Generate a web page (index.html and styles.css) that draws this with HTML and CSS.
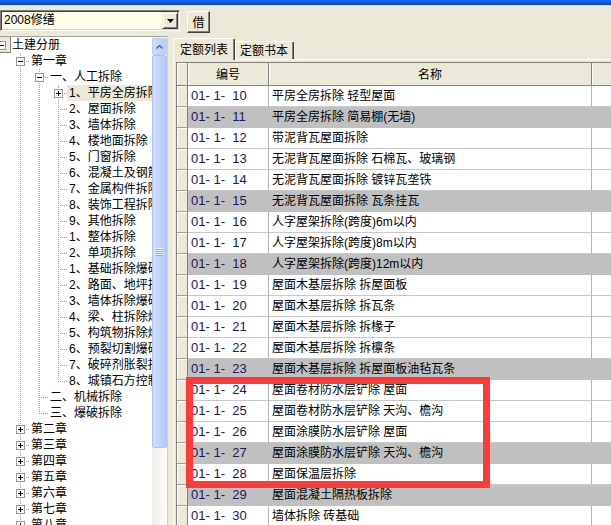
FILE: index.html
```html
<!DOCTYPE html>
<html lang="zh-CN">
<head>
<meta charset="utf-8">
<title>定额</title>
<link rel="stylesheet" href="styles.css">
</head>
<body>
<div class="app">
  <div class="titlebar"></div>
  <div class="toolbar">
    <div class="combo">
      <span class="combo-text">2008修缮</span>
      <span class="combo-btn"><svg width="7" height="4" viewBox="0 0 7 4"><path d="M0 0H7L3.5 4Z" fill="#000"/></svg></span>
    </div>
    <button class="btn">借</button>
  </div>
  <div class="main">
    <div class="tree-panel">
      <div class="tree">
        <div class="tr"><span class="i h"><span class="bx mi"></span></span><span class="t">土建分册</span></div>
        <div class="tr"><span class="i"></span><span class="i c"><span class="bx mi"></span></span><span class="t">第一章</span></div>
        <div class="tr"><span class="i"></span><span class="i g"></span><span class="i c"><span class="bx mi"></span></span><span class="t">一、人工拆除</span></div>
        <div class="tr"><span class="i"></span><span class="i g"></span><span class="i g"></span><span class="i c"><span class="bx pl"></span></span><span class="t sel">1、平房全房拆除</span></div>
        <div class="tr"><span class="i"></span><span class="i g"></span><span class="i g"></span><span class="i c"></span><span class="t">2、屋面拆除</span></div>
        <div class="tr"><span class="i"></span><span class="i g"></span><span class="i g"></span><span class="i c"></span><span class="t">3、墙体拆除</span></div>
        <div class="tr"><span class="i"></span><span class="i g"></span><span class="i g"></span><span class="i c"></span><span class="t">4、楼地面拆除</span></div>
        <div class="tr"><span class="i"></span><span class="i g"></span><span class="i g"></span><span class="i c"></span><span class="t">5、门窗拆除</span></div>
        <div class="tr"><span class="i"></span><span class="i g"></span><span class="i g"></span><span class="i c"></span><span class="t">6、混凝土及钢筋混凝土拆除</span></div>
        <div class="tr"><span class="i"></span><span class="i g"></span><span class="i g"></span><span class="i c"></span><span class="t">7、金属构件拆除</span></div>
        <div class="tr"><span class="i"></span><span class="i g"></span><span class="i g"></span><span class="i c"></span><span class="t">8、装饰工程拆除</span></div>
        <div class="tr"><span class="i"></span><span class="i g"></span><span class="i g"></span><span class="i c"></span><span class="t">9、其他拆除</span></div>
        <div class="tr"><span class="i"></span><span class="i g"></span><span class="i g"></span><span class="i c"></span><span class="t">1、整体拆除</span></div>
        <div class="tr"><span class="i"></span><span class="i g"></span><span class="i g"></span><span class="i c"></span><span class="t">2、单项拆除</span></div>
        <div class="tr"><span class="i"></span><span class="i g"></span><span class="i g"></span><span class="i c"></span><span class="t">1、基础拆除爆破</span></div>
        <div class="tr"><span class="i"></span><span class="i g"></span><span class="i g"></span><span class="i c"></span><span class="t">2、路面、地坪拆除爆破</span></div>
        <div class="tr"><span class="i"></span><span class="i g"></span><span class="i g"></span><span class="i c"></span><span class="t">3、墙体拆除爆破</span></div>
        <div class="tr"><span class="i"></span><span class="i g"></span><span class="i g"></span><span class="i c"></span><span class="t">4、梁、柱拆除爆破</span></div>
        <div class="tr"><span class="i"></span><span class="i g"></span><span class="i g"></span><span class="i c"></span><span class="t">5、构筑物拆除爆破</span></div>
        <div class="tr"><span class="i"></span><span class="i g"></span><span class="i g"></span><span class="i c"></span><span class="t">6、预裂切割爆破</span></div>
        <div class="tr"><span class="i"></span><span class="i g"></span><span class="i g"></span><span class="i c"></span><span class="t">7、破碎剂胀裂拆除</span></div>
        <div class="tr"><span class="i"></span><span class="i g"></span><span class="i g"></span><span class="i l"></span><span class="t">8、城镇石方控制爆破</span></div>
        <div class="tr"><span class="i"></span><span class="i g"></span><span class="i c"></span><span class="t">二、机械拆除</span></div>
        <div class="tr"><span class="i"></span><span class="i g"></span><span class="i l"></span><span class="t">三、爆破拆除</span></div>
        <div class="tr"><span class="i"></span><span class="i c"><span class="bx pl"></span></span><span class="t">第二章</span></div>
        <div class="tr"><span class="i"></span><span class="i c"><span class="bx pl"></span></span><span class="t">第三章</span></div>
        <div class="tr"><span class="i"></span><span class="i c"><span class="bx pl"></span></span><span class="t">第四章</span></div>
        <div class="tr"><span class="i"></span><span class="i c"><span class="bx pl"></span></span><span class="t">第五章</span></div>
        <div class="tr"><span class="i"></span><span class="i c"><span class="bx pl"></span></span><span class="t">第六章</span></div>
        <div class="tr"><span class="i"></span><span class="i c"><span class="bx pl"></span></span><span class="t">第七章</span></div>
        <div class="tr"><span class="i"></span><span class="i c"><span class="bx pl"></span></span><span class="t">第八章</span></div>
      </div>
      <div class="vscroll">
        <div class="sb-up"><svg width="7" height="4" viewBox="0 0 7 4"><path d="M0.5 3.5L3.5 0.5L6.5 3.5" fill="none" stroke="#4d6185" stroke-width="1.4"/></svg></div>
        <div class="sb-thumb"><span class="grip"></span></div>
        <div class="sb-track"></div>
      </div>
    </div>
    <div class="right">
      <div class="tabs">
        <div class="tab active">定额列表</div>
        <div class="tab">定额书本</div>
      </div>
      <div class="page">
        <div class="grid">
          <div class="row head"><div class="ind"></div><div class="h">编号</div><div class="h">名称</div><div class="h"></div></div>
          <div class="row"><div class="ind"></div><div class="d code">01- 1-  10</div><div class="d">平房全房拆除 轻型屋面</div><div class="d"></div></div>
          <div class="row alt"><div class="ind"></div><div class="d code">01- 1-  11</div><div class="d">平房全房拆除 简易棚(无墙)</div><div class="d"></div></div>
          <div class="row"><div class="ind"></div><div class="d code">01- 1-  12</div><div class="d">带泥背瓦屋面拆除</div><div class="d"></div></div>
          <div class="row"><div class="ind"></div><div class="d code">01- 1-  13</div><div class="d">无泥背瓦屋面拆除 石棉瓦、玻璃钢</div><div class="d"></div></div>
          <div class="row"><div class="ind"></div><div class="d code">01- 1-  14</div><div class="d">无泥背瓦屋面拆除 镀锌瓦垄铁</div><div class="d"></div></div>
          <div class="row alt"><div class="ind"></div><div class="d code">01- 1-  15</div><div class="d">无泥背瓦屋面拆除 瓦条挂瓦</div><div class="d"></div></div>
          <div class="row"><div class="ind"></div><div class="d code">01- 1-  16</div><div class="d">人字屋架拆除(跨度)6m以内</div><div class="d"></div></div>
          <div class="row"><div class="ind"></div><div class="d code">01- 1-  17</div><div class="d">人字屋架拆除(跨度)8m以内</div><div class="d"></div></div>
          <div class="row alt"><div class="ind"></div><div class="d code">01- 1-  18</div><div class="d">人字屋架拆除(跨度)12m以内</div><div class="d"></div></div>
          <div class="row"><div class="ind"></div><div class="d code">01- 1-  19</div><div class="d">屋面木基层拆除 拆屋面板</div><div class="d"></div></div>
          <div class="row"><div class="ind"></div><div class="d code">01- 1-  20</div><div class="d">屋面木基层拆除 拆瓦条</div><div class="d"></div></div>
          <div class="row"><div class="ind"></div><div class="d code">01- 1-  21</div><div class="d">屋面木基层拆除 拆椽子</div><div class="d"></div></div>
          <div class="row"><div class="ind"></div><div class="d code">01- 1-  22</div><div class="d">屋面木基层拆除 拆檩条</div><div class="d"></div></div>
          <div class="row alt"><div class="ind"></div><div class="d code">01- 1-  23</div><div class="d">屋面木基层拆除 拆屋面板油毡瓦条</div><div class="d"></div></div>
          <div class="row"><div class="ind"></div><div class="d code">01- 1-  24</div><div class="d">屋面卷材防水层铲除 屋面</div><div class="d"></div></div>
          <div class="row"><div class="ind"></div><div class="d code">01- 1-  25</div><div class="d">屋面卷材防水层铲除 天沟、檐沟</div><div class="d"></div></div>
          <div class="row"><div class="ind"></div><div class="d code">01- 1-  26</div><div class="d">屋面涂膜防水层铲除 屋面</div><div class="d"></div></div>
          <div class="row alt"><div class="ind"></div><div class="d code">01- 1-  27</div><div class="d">屋面涂膜防水层铲除 天沟、檐沟</div><div class="d"></div></div>
          <div class="row"><div class="ind"></div><div class="d code">01- 1-  28</div><div class="d">屋面保温层拆除</div><div class="d"></div></div>
          <div class="row alt"><div class="ind"></div><div class="d code">01- 1-  29</div><div class="d">屋面混凝土隔热板拆除</div><div class="d"></div></div>
          <div class="row"><div class="ind"></div><div class="d code">01- 1-  30</div><div class="d">墙体拆除 砖基础</div><div class="d"></div></div>
        </div>
        <div class="mark"></div>
      </div>
    </div>
  </div>
</div>
</body>
</html>
```

FILE: styles.css
```css
* { box-sizing: border-box; margin: 0; padding: 0; }
html, body { width: 611px; height: 525px; overflow: hidden; }
body {
  background: #ece9d8;
  font-family: "Liberation Sans", "Noto Sans CJK SC", sans-serif;
  font-size: 12px;
  color: #000;
}
.app { width: 611px; height: 525px; overflow: hidden; }

.titlebar { height: 5px; background: linear-gradient(#1d6af0, #0046d2); }

.toolbar { height: 31px; display: flex; align-items: flex-start; gap: 7px; padding-top: 5px; }
.combo {
  width: 180px; height: 21px; display: flex; align-items: center;
  background: #fffde8;
  border: 1px solid; border-color: #808080 #fff #fff #808080;
  box-shadow: inset 1px 1px 0 #404040, inset -1px -1px 0 #d4d0c8;
  padding: 2px 1px 2px 2px;
}
.combo-text { flex: 1; padding-left: 1px; font-size: 12px; line-height: 15px; }
.combo-btn {
  width: 16px; height: 17px; display: flex; align-items: center; justify-content: center;
  background: #ece9d8;
  border: 1px solid; border-color: #ece9d8 #404040 #404040 #ece9d8;
  box-shadow: inset 1px 1px 0 #fff, inset -1px -1px 0 #808080;
}
.btn {
  width: 23px; height: 22px; margin-top: 1px;
  font: 12px "Noto Sans CJK SC", sans-serif; line-height: 18px;
  background: #ece9d8; color: #000;
  border: 1px solid; border-color: #fff #404040 #404040 #fff;
  box-shadow: inset -1px -1px 0 #808080;
}

.main { height: 489px; display: flex; }

.tree-panel {
  width: 168px; display: flex; background: #fff;
  border-top: 1px solid #a0a0a0; border-right: 1px solid #d4d0c8;
}
.tree { flex: 1; overflow: hidden; margin-left: -8px; }
.tr { display: flex; height: 16px; white-space: nowrap; }
.i { flex: none; width: 19px; height: 16px; display: flex; justify-content: center; padding-top: 4px; }
.g {
  background: repeating-linear-gradient(to bottom, #a0a0a0 0 1px, transparent 1px 2px) 9px 0 / 1px 16px no-repeat;
}
.c {
  background:
    repeating-linear-gradient(to bottom, #a0a0a0 0 1px, transparent 1px 2px) 9px 0 / 1px 16px no-repeat,
    repeating-linear-gradient(to right, #a0a0a0 0 1px, transparent 1px 2px) 9px 8px / 10px 1px no-repeat;
}
.l {
  background:
    repeating-linear-gradient(to bottom, #a0a0a0 0 1px, transparent 1px 2px) 9px 0 / 1px 9px no-repeat,
    repeating-linear-gradient(to right, #a0a0a0 0 1px, transparent 1px 2px) 9px 8px / 10px 1px no-repeat;
}
.h {
  background: repeating-linear-gradient(to right, #a0a0a0 0 1px, transparent 1px 2px) 9px 8px / 10px 1px no-repeat;
}
.bx { width: 9px; height: 9px; border: 1px solid #919b9c; background-color: #fff; }
.mi { background: #fff linear-gradient(#000, #000) center / 5px 1px no-repeat; }
.pl {
  background:
    linear-gradient(#000, #000) center / 5px 1px no-repeat,
    linear-gradient(#000, #000) center / 1px 5px no-repeat,
    #fff;
}
.t { line-height: 16px; margin-left: -1px; padding: 0 2px; }
.sel { background: #ece9d8; }

.vscroll { width: 15px; flex: none; display: flex; flex-direction: column; background: linear-gradient(to right, #f1efe8, #fdfdfa); }
.sb-up {
  height: 17px; margin-top: 1px; display: flex; align-items: center; justify-content: center;
  border: 1px solid #bccdf6; border-radius: 2px;
  background: linear-gradient(to right, #cedcfc, #b9cbf8);
}
.sb-thumb {
  height: 393px; display: flex; align-items: center; justify-content: center;
  border: 1px solid #aec3f4; border-radius: 2px;
  background: linear-gradient(to right, #d2defd, #c1d2fb 50%, #b6c9f7);
}
.grip { width: 7px; height: 8px; background: repeating-linear-gradient(to bottom, #eef3fe 0 1px, #8ca6e0 1px 2px); }
.sb-track { flex: 1; }

.right { flex: 1; margin-left: 5px; display: flex; flex-direction: column; min-width: 0; }
.tabs { height: 22px; margin-top: 1px; display: flex; align-items: flex-end; }
.tab {
  font-family: "Noto Sans CJK SC", sans-serif; font-size: 12px;
  height: 18px; line-height: 16px; padding: 0 5px 0 4px;
  background: #ece9d8;
  border: 1px solid; border-bottom: 0; border-color: #fff #404040 #fff #fff;
  box-shadow: inset -1px 0 0 #808080;
  border-radius: 2px 2px 0 0;
}
.tab.active {
  height: 22px; line-height: 19px; padding: 0 6px; margin-bottom: -1px;
  position: relative; z-index: 1;
}
.page {
  position: relative; flex: 1; overflow: hidden;
  border-top: 1px solid #fff; border-left: 1px solid #fff;
  padding: 2px 0 0 2px;
}

.grid { width: 520px; border-top: 1px solid #808080; border-left: 1px solid #808080; }
.row { display: grid; grid-template-columns: 11px 81px 323px 1fr; height: 21px; }
.row.head { height: 23px; }
.ind {
  background: #ece9d8;
  border-right: 1px solid #808080; border-bottom: 1px solid #a0a0a0;
  box-shadow: inset 1px 1px 0 #fff;
}
.head .ind { border-bottom-color: #808080; }
.h {
  background: #ece9d8; text-align: center;
  font-family: "Noto Sans CJK SC", sans-serif;
  line-height: 22px;
  border-right: 1px solid #808080; border-bottom: 1px solid #808080;
  box-shadow: inset 1px 0 0 #fff;
}
.d {
  background: #fff; white-space: pre; overflow: hidden;
  line-height: 20px; padding-left: 3px;
  border-right: 1px solid #b4b4b4; border-bottom: 1px solid #c8c8c8;
}
.d.code { font-size: 13px; padding-left: 3px; color: #1a1a5a; }
.row.alt .d { background: #c0c0c0; border-color: #c0c0c0; }

.mark {
  position: absolute; left: 12px; top: 317px;
  width: 304px; height: 111px;
  border: 7px solid #fb3a3a;
}
```
